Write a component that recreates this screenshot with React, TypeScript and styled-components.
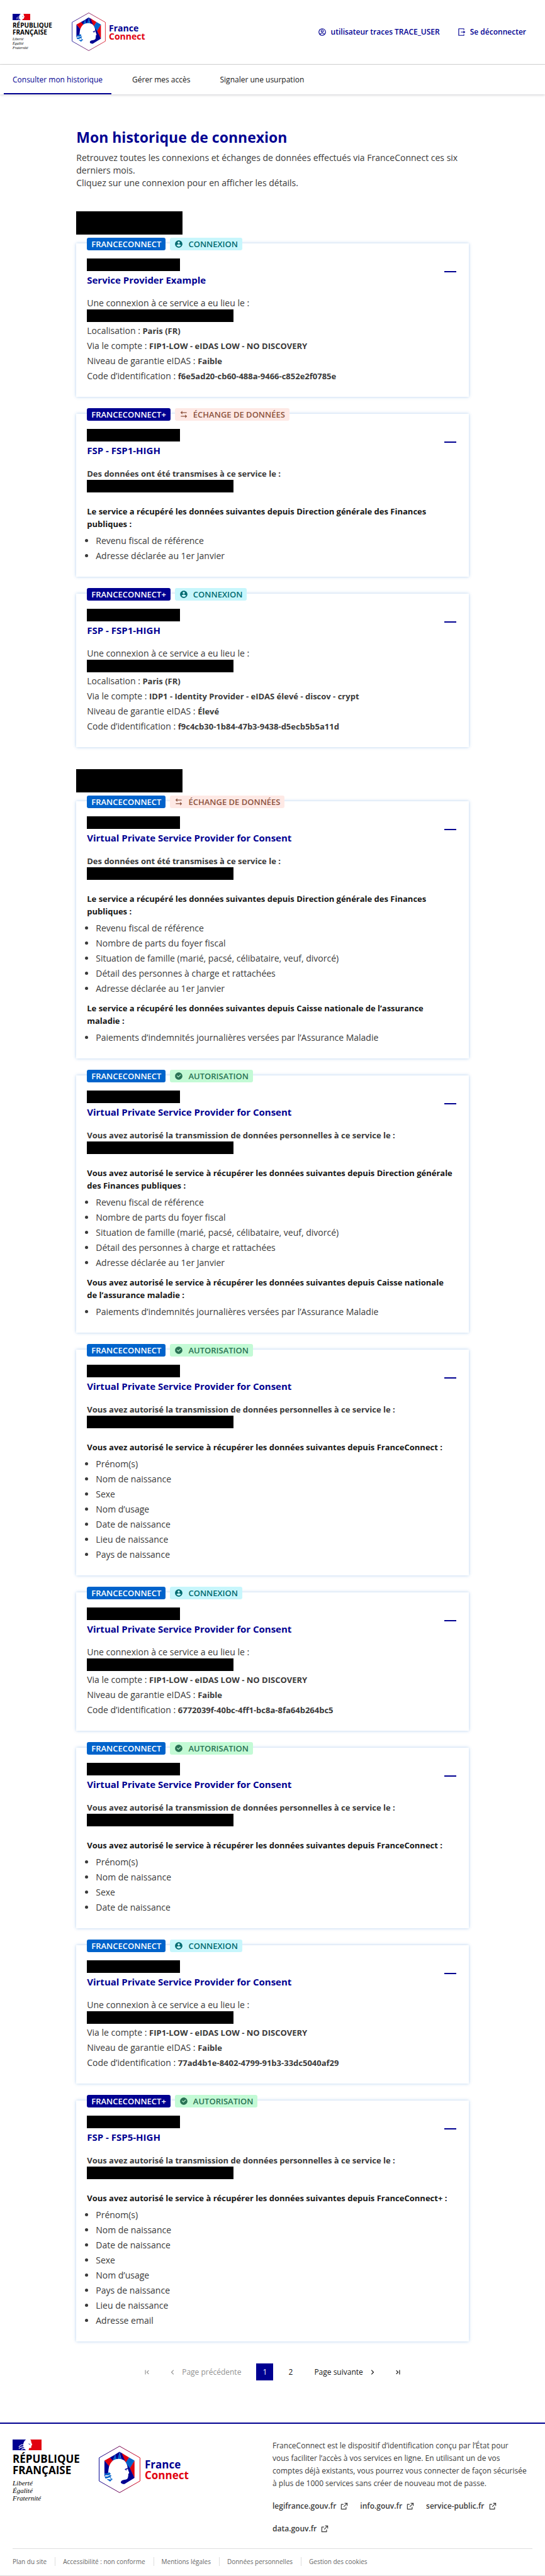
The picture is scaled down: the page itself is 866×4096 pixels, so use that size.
import React, { useState } from "react";
import styled, { createGlobalStyle } from "styled-components";
import {
  RiAccountCircleFill,
  RiAccountCircleLine,
  RiArrowLeftSLine,
  RiArrowRightSLine,
  RiCheckboxCircleFill,
  RiExternalLinkLine,
  RiLogoutBoxRLine,
} from "react-icons/ri";

const blue = "#000091";
const red = "#e1000f";
const lightBlue = "#0063cb";

const GlobalStyle = createGlobalStyle`
  *, *::before, *::after { box-sizing: border-box; }
  body {
    margin: 0;
    background: #fff;
    color: #3a3a3a;
    font-family: "Open Sans", "Noto Sans", sans-serif;
    font-size: 14px;
    line-height: 20px;
  }
  h1, h2, h3, h4, p, ul { margin: 0; padding: 0; }
  ul { list-style: none; }
  a { color: inherit; text-decoration: none; }
  button { font: inherit; color: inherit; background: none; border: 0; padding: 0; cursor: pointer; }
  svg { display: block; flex: none; }
`;

/* Header */

const HeaderBar = styled.header`
  display: flex;
  align-items: flex-start;
  justify-content: space-between;
  height: 103px;
  padding: 20px;
  border-bottom: 1px solid #ddd;
`;

const LogoGroup = styled.div<{ $large?: boolean }>`
  display: flex;
  align-items: flex-start;
  gap: ${(p) => (p.$large ? 28 : 29)}px;
`;

const StateLogo = styled.div<{ $large?: boolean }>`
  width: ${(p) => (p.$large ? 109 : 65)}px;
  padding-top: ${(p) => (p.$large ? 0 : 2)}px;
  color: #000;
`;

const StateName = styled.div<{ $large?: boolean }>`
  margin-top: ${(p) => (p.$large ? 5 : 3)}px;
  font-weight: 700;
  white-space: nowrap;
  font-size: ${(p) => (p.$large ? 17 : 10)}px;
  line-height: ${(p) => (p.$large ? 18 : 11)}px;
`;

const StateMotto = styled.div<{ $large?: boolean }>`
  margin-top: ${(p) => (p.$large ? 5 : 2)}px;
  font-family: "Liberation Serif", serif;
  font-style: italic;
  font-size: ${(p) => (p.$large ? 11 : 6)}px;
  line-height: ${(p) => (p.$large ? 12 : 7)}px;
`;

const BrandLogo = styled.div<{ $large?: boolean }>`
  display: flex;
  align-items: center;
  gap: ${(p) => (p.$large ? 7 : 5)}px;
  padding-top: ${(p) => (p.$large ? 10 : 0)}px;
  font-weight: 700;
  font-size: ${(p) => (p.$large ? 17 : 14)}px;
  line-height: ${(p) => (p.$large ? 17 : 13)}px;
`;

const BrandWord = styled.div<{ $red?: boolean }>`
  color: ${(p) => (p.$red ? red : blue)};
`;

const Tools = styled.div`
  display: flex;
  gap: 27px;
  padding: 21px 10px 0 0;
  color: ${blue};
  font-size: 12px;
  font-weight: 600;
`;

const ToolLink = styled.a`
  display: flex;
  align-items: center;
  gap: 7px;
`;

const Nav = styled.nav`
  display: flex;
  height: 47px;
  padding: 0 6px;
  box-shadow: 0 1px 4px rgba(0, 0, 18, 0.2);
`;

const NavLink = styled.a<{ $active?: boolean }>`
  display: flex;
  align-items: center;
  padding: 2px 14px 0;
  margin-right: 19px;
  font-size: 12px;
  color: ${(p) => (p.$active ? blue : "#161616")};
  border-bottom: 2px solid ${(p) => (p.$active ? blue : "transparent")};
`;

/* History */

const Main = styled.main`
  width: 72%;
  margin: 0 auto;
  padding: 52px 0 67px;
`;

const PageTitle = styled.h1`
  color: ${blue};
  font-size: 23px;
  line-height: 32px;
  font-weight: 700;
`;

const Intro = styled.p`
  margin-top: 7px;
`;

const DayGroup = styled.section`
  margin-top: 35px;
`;

const Redacted = styled.div<{ $kind: "day" | "date" | "moment" }>`
  background: #000;
  height: ${(p) => (p.$kind === "day" ? 37 : 20)}px;
  width: ${(p) => ({ day: 169, date: 148, moment: 233 })[p.$kind]}px;
`;

const CardList = styled.div`
  display: flex;
  flex-direction: column;
  gap: 27px;
  margin-top: 14px;
`;

const Card = styled.article`
  padding: 0 17px 19px;
  background: #fff;
  box-shadow: 0 0 5px rgba(0, 99, 203, 0.3);
`;

const Badges = styled.div`
  display: flex;
  gap: 7px;
  margin-top: -9px;
`;

const tones = {
  standard: { bg: lightBlue, fg: "#fff" },
  plus: { bg: blue, fg: "#fff" },
  connexion: { bg: "#c7f6fc", fg: "#006a6f" },
  exchange: { bg: "#fee9e5", fg: "#8d533e" },
  consent: { bg: "#c3fad5", fg: "#297254" },
};

const Badge = styled.span<{ $tone: keyof typeof tones }>`
  display: flex;
  align-items: center;
  gap: 8px;
  height: 20px;
  padding: 0 7px;
  border-radius: 3px;
  font-size: 13px;
  font-weight: 600;
  text-transform: uppercase;
  background: ${(p) => tones[p.$tone].bg};
  color: ${(p) => tones[p.$tone].fg};
`;

const CardHead = styled.div`
  display: flex;
  justify-content: space-between;
  align-items: flex-start;
  margin-top: 13px;
`;

const CardTitle = styled.h3`
  margin-top: 4px;
  color: ${blue};
  font-size: 15px;
  line-height: 20px;
  font-weight: 700;
`;

const ToggleButton = styled.button`
  display: flex;
  align-items: center;
  height: 41px;
  padding: 0 3px;
`;

const Details = styled.div`
  margin-top: 17px;
`;

const Strong = styled.strong`
  font-size: 13px;
  font-weight: 700;
`;

const Fact = styled.p`
  padding-top: 4px;
`;

const FactList = styled.div`
  padding-bottom: 4px;
`;

const Source = styled.div`
  margin-top: 20px;

  & + & {
    margin-top: 7px;
  }
`;

const SourceTitle = styled.h4`
  color: #161616;
  font-size: 13px;
  line-height: 20px;
  font-weight: 700;
`;

const Claims = styled.ul`
  margin-top: 7px;
  padding-left: 14px;
  list-style: disc;

  li {
    padding-bottom: 4px;
  }
`;

/* Pagination */

const Pagination = styled.nav`
  display: flex;
  justify-content: center;
  gap: 14px;
  margin-top: 35px;
  font-size: 12px;
  color: #161616;
`;

const PageButton = styled.button<{ $current?: boolean }>`
  display: flex;
  align-items: center;
  justify-content: center;
  width: 27px;
  height: 27px;
  background: ${(p) => (p.$current ? blue : "transparent")};
  color: ${(p) => (p.$current ? "#f5f5fe" : "inherit")};

  &:disabled {
    color: #929292;
    cursor: default;
  }
`;

const StepButton = styled(PageButton)<{ $next?: boolean }>`
  width: auto;
  gap: 8px;
  padding: ${(p) => (p.$next ? "0 6px 0 10px" : "0 10px 0 6px")};
`;

/* Footer */

const FooterBar = styled.footer`
  padding: 25px 20px 15px;
  border-top: 2px solid ${blue};
  border-bottom: 1px solid #ddd;
`;

const FooterTop = styled.div`
  display: grid;
  grid-template-columns: 1fr 1fr;
  padding-bottom: 21px;
  border-bottom: 1px solid #ddd;
`;

const FooterText = styled.div`
  font-size: 12px;
`;

const SiteLinks = styled.div`
  display: flex;
  flex-wrap: wrap;
  gap: 16px 18px;
  margin-top: 16px;
  font-weight: 600;
`;

const SiteLink = styled.a`
  display: flex;
  align-items: center;
  gap: 6px;
`;

const LegalLinks = styled.div`
  display: flex;
  padding-top: 13px;
  font-size: 10px;
  line-height: 14px;
  color: #666;

  a + a {
    margin-left: 13px;
    padding-left: 12px;
    border-left: 1px solid #ddd;
  }
`;

function Flag({ width, height }: { width: number; height: number }) {
  return (
    <svg width={width} height={height} viewBox="0 0 56 20" preserveAspectRatio="none" aria-hidden="true">
      <path d="M0 0H26C23 2 22 4 21 7C20 10 22 12 20 13C23 14 22 18 26 20H0Z" fill={blue} />
      <path d="M56 0H34C37 2 35 4 37 7L38 10L36 12C37 15 36 16 32 16L31 20H56Z" fill={red} />
      <path d="M12 14C15 10 18 9 21 10M12 17C15 14 18 13 22 14M17 19C19 16 21 17 24 17" stroke="#fff" strokeWidth="1.3" fill="none" />
      <path d="M31 8L34 9" stroke={blue} strokeWidth="1" />
    </svg>
  );
}

function Marianne({ width, height, id }: { width: number; height: number; id: string }) {
  return (
    <svg width={width} height={height} viewBox="0 0 236 268" aria-hidden="true">
      <defs>
        <linearGradient id={id} x1="0" x2="1" y1="0" y2="0">
          <stop offset="0" stopColor={blue} />
          <stop offset="1" stopColor={red} />
        </linearGradient>
      </defs>
      <path d="M118 2L234 68V200L118 266L2 200V68Z" fill="#fff" stroke={`url(#${id})`} strokeWidth="3.5" />
      <path d="M32 84L64 66L84 80L59 118Z" fill={red} />
      <path d="M32 84L60 117L56 150L32 172Z" fill={blue} />
      <path d="M64 66L94 49L80 84Z" fill={blue} />
      <path d="M94 49L118 34L100 82L78 84Z" fill={lightBlue} />
      <path d="M118 34L94 49L102 80H118Z" fill={blue} />
      <path d="M118 36L104 82H128Z" fill={lightBlue} />
      <path d="M118 34L140 47L156 96L130 86Z" fill={blue} />
      <path d="M130 41L172 66L154 98Z" fill={red} />
      <path d="M172 66L203 84L177 130L153 96Z" fill={lightBlue} />
      <path d="M203 84V182L176 129Z" fill={red} />
      <path d="M154 96L177 128L203 182L146 217C128 218 120 208 128 200C138 190 168 196 164 178Z" fill={blue} />
      <path
        d="M54 168C52 110 70 76 112 74C142 74 152 88 158 104C164 114 161 120 167 138L173 155L167 160C169 168 166 172 166 180C160 190 142 184 134 190C126 198 122 208 128 216H88C96 190 70 190 60 174Z"
        fill="#fff"
      />
      <path d="M146 133L164 125L163 133L156 134L158 142L152 137Z" fill={blue} />
      <path d="M32 158C40 154 48 162 58 150L68 158C60 170 44 170 32 164Z" fill={lightBlue} />
      <path d="M32 172C48 178 52 172 66 166L72 170C66 180 50 184 38 186Z" fill={lightBlue} />
      <path d="M46 190C58 188 62 196 80 186L64 204C58 196 52 196 46 190Z" fill={lightBlue} />
      <path d="M64 178L76 194" stroke={lightBlue} strokeWidth="4" />
    </svg>
  );
}

function Logos({ large }: { large?: boolean }) {
  return (
    <LogoGroup $large={large}>
      <StateLogo $large={large}>
        <Flag width={large ? 46 : 28} height={large ? 17 : 10} />
        <StateName $large={large}>
          RÉPUBLIQUE
          <br />
          FRANÇAISE
        </StateName>
        <StateMotto $large={large}>
          Liberté
          <br />
          Égalité
          <br />
          Fraternité
        </StateMotto>
      </StateLogo>
      <BrandLogo $large={large}>
        <Marianne width={large ? 66 : 54} height={large ? 75 : 61} id={large ? "ring-footer" : "ring-header"} />
        <div>
          <BrandWord>France</BrandWord>
          <BrandWord $red>Connect</BrandWord>
        </div>
      </BrandLogo>
    </LogoGroup>
  );
}

function ExchangeIcon() {
  return (
    <svg width="14" height="14" viewBox="0 0 24 24" fill="currentColor" aria-hidden="true">
      <path d="M16 16v-4l5 5-5 5v-4H4v-2h12zM8 2v4h12v2H8v4L3 7l5-5z" />
    </svg>
  );
}

function EndIcon({ last }: { last?: boolean }) {
  return (
    <svg width="14" height="14" viewBox="0 0 24 24" fill="none" stroke="currentColor" strokeWidth="2" aria-hidden="true">
      <path d={last ? "M8 7l5 5-5 5M17 6v12" : "M16 7l-5 5 5 5M7 6v12"} />
    </svg>
  );
}

type Entry = {
  plus?: boolean;
  kind: "connexion" | "exchange" | "consent";
  service: string;
  facts?: [string, string][];
  sources?: { name: string; claims: string[] }[];
};

const kinds = {
  connexion: { label: "Connexion", icon: <RiAccountCircleFill size={14} />, lead: "Une connexion à ce service a eu lieu le :", source: "" },
  exchange: {
    label: "Échange de données",
    icon: <ExchangeIcon />,
    lead: "Des données ont été transmises à ce service le :",
    source: "Le service a récupéré les données suivantes depuis",
  },
  consent: {
    label: "Autorisation",
    icon: <RiCheckboxCircleFill size={14} />,
    lead: "Vous avez autorisé la transmission de données personnelles à ce service le :",
    source: "Vous avez autorisé le service à récupérer les données suivantes depuis",
  },
};

const PRIVATE = "Virtual Private Service Provider for Consent";
const LOW = "FIP1-LOW - eIDAS LOW - NO DISCOVERY";
const taxAndHealth = [
  {
    name: "Direction générale des Finances publiques",
    claims: [
      "Revenu fiscal de référence",
      "Nombre de parts du foyer fiscal",
      "Situation de famille (marié, pacsé, célibataire, veuf, divorcé)",
      "Détail des personnes à charge et rattachées",
      "Adresse déclarée au 1er Janvier",
    ],
  },
  {
    name: "Caisse nationale de\u00a0l’assurance maladie",
    claims: ["Paiements d’indemnités journalières versées par l’Assurance Maladie"],
  },
];

const days: Entry[][] = [
  [
    {
      kind: "connexion",
      service: "Service Provider Example",
      facts: [
        ["Localisation", "Paris (FR)"],
        ["Via le compte", LOW],
        ["Niveau de garantie eIDAS", "Faible"],
        ["Code d’identification", "f6e5ad20-cb60-488a-9466-c852e2f0785e"],
      ],
    },
    {
      plus: true,
      kind: "exchange",
      service: "FSP - FSP1-HIGH",
      sources: [
        {
          name: "Direction générale des Finances publiques",
          claims: ["Revenu fiscal de référence", "Adresse déclarée au 1er Janvier"],
        },
      ],
    },
    {
      plus: true,
      kind: "connexion",
      service: "FSP - FSP1-HIGH",
      facts: [
        ["Localisation", "Paris (FR)"],
        ["Via le compte", "IDP1 - Identity Provider - eIDAS élevé - discov - crypt"],
        ["Niveau de garantie eIDAS", "Élevé"],
        ["Code d’identification", "f9c4cb30-1b84-47b3-9438-d5ecb5b5a11d"],
      ],
    },
  ],
  [
    { kind: "exchange", service: PRIVATE, sources: taxAndHealth },
    { kind: "consent", service: PRIVATE, sources: taxAndHealth },
    {
      kind: "consent",
      service: PRIVATE,
      sources: [
        {
          name: "FranceConnect",
          claims: ["Prénom(s)", "Nom de naissance", "Sexe", "Nom d’usage", "Date de naissance", "Lieu de naissance", "Pays de naissance"],
        },
      ],
    },
    {
      kind: "connexion",
      service: PRIVATE,
      facts: [
        ["Via le compte", LOW],
        ["Niveau de garantie eIDAS", "Faible"],
        ["Code d’identification", "6772039f-40bc-4ff1-bc8a-8fa64b264bc5"],
      ],
    },
    {
      kind: "consent",
      service: PRIVATE,
      sources: [{ name: "FranceConnect", claims: ["Prénom(s)", "Nom de naissance", "Sexe", "Date de naissance"] }],
    },
    {
      kind: "connexion",
      service: PRIVATE,
      facts: [
        ["Via le compte", LOW],
        ["Niveau de garantie eIDAS", "Faible"],
        ["Code d’identification", "77ad4b1e-8402-4799-91b3-33dc5040af29"],
      ],
    },
    {
      plus: true,
      kind: "consent",
      service: "FSP - FSP5-HIGH",
      sources: [
        {
          name: "FranceConnect+",
          claims: [
            "Prénom(s)",
            "Nom de naissance",
            "Date de naissance",
            "Sexe",
            "Nom d’usage",
            "Pays de naissance",
            "Lieu de naissance",
            "Adresse email",
          ],
        },
      ],
    },
  ],
];

function EntryCard({ entry }: { entry: Entry }) {
  const [open, setOpen] = useState(true);
  const kind = kinds[entry.kind];
  return (
    <Card>
      <Badges>
        <Badge $tone={entry.plus ? "plus" : "standard"}>{entry.plus ? "FranceConnect+" : "FranceConnect"}</Badge>
        <Badge $tone={entry.kind}>
          {kind.icon}
          {kind.label}
        </Badge>
      </Badges>
      <CardHead>
        <div>
          <Redacted $kind="date" />
          <CardTitle>{entry.service}</CardTitle>
        </div>
        <ToggleButton type="button" aria-expanded={open} aria-label={entry.service} onClick={() => setOpen(!open)}>
          <svg width="19" height="20" viewBox="0 0 19 20" stroke={blue} strokeWidth="2">
            <path d={open ? "M0 10H19" : "M0 10H19M9 1V19"} />
          </svg>
        </ToggleButton>
      </CardHead>
      {open && (
        <Details>
          <p>{entry.facts ? kind.lead : <Strong>{kind.lead}</Strong>}</p>
          <Redacted $kind="moment" />
          {entry.facts && (
            <FactList>
              {entry.facts.map(([label, value]) => (
                <Fact key={label}>
                  {`${label} : `}
                  <Strong>{value}</Strong>
                </Fact>
              ))}
            </FactList>
          )}
          {entry.sources?.map((source) => (
            <Source key={source.name}>
              <SourceTitle>{`${kind.source} ${source.name} :`}</SourceTitle>
              <Claims>
                {source.claims.map((claim) => (
                  <li key={claim}>{claim}</li>
                ))}
              </Claims>
            </Source>
          ))}
        </Details>
      )}
    </Card>
  );
}

export default function App() {
  return (
    <>
      <GlobalStyle />
      <HeaderBar>
        <Logos />
        <Tools>
          <ToolLink href="#compte">
            <RiAccountCircleLine size={14} />
            utilisateur traces TRACE_USER
          </ToolLink>
          <ToolLink href="#deconnexion">
            <RiLogoutBoxRLine size={14} />
            Se déconnecter
          </ToolLink>
        </Tools>
      </HeaderBar>
      <Nav>
        <NavLink href="#historique" $active aria-current="page">
          Consulter mon historique
        </NavLink>
        <NavLink href="#acces">Gérer mes accès</NavLink>
        <NavLink href="#usurpation">Signaler une usurpation</NavLink>
      </Nav>
      <Main>
        <PageTitle>Mon historique de connexion</PageTitle>
        <Intro>
          Retrouvez toutes les connexions et échanges de données effectués via FranceConnect ces six derniers mois.
          <br />
          Cliquez sur une connexion pour en afficher les détails.
        </Intro>
        {days.map((entries, day) => (
          <DayGroup key={day}>
            <Redacted $kind="day" />
            <CardList>
              {entries.map((entry, index) => (
                <EntryCard key={index} entry={entry} />
              ))}
            </CardList>
          </DayGroup>
        ))}
        <Pagination aria-label="Pagination">
          <PageButton type="button" disabled aria-label="Première page">
            <EndIcon />
          </PageButton>
          <StepButton type="button" disabled>
            <RiArrowLeftSLine size={14} />
            Page précédente
          </StepButton>
          <PageButton type="button" $current aria-current="page">
            1
          </PageButton>
          <PageButton type="button">2</PageButton>
          <StepButton type="button" $next>
            Page suivante
            <RiArrowRightSLine size={14} />
          </StepButton>
          <PageButton type="button" aria-label="Dernière page">
            <EndIcon last />
          </PageButton>
        </Pagination>
      </Main>
      <FooterBar>
        <FooterTop>
          <Logos large />
          <FooterText>
            <p>
              FranceConnect est le dispositif d’identification conçu par l’État pour vous&nbsp;faciliter l’accès à vos
              services en ligne. En utilisant un de vos comptes&nbsp;déjà existants, vous pourrez vous connecter de
              façon sécurisée à&nbsp;plus de 1000 services sans créer de nouveau mot de passe.
            </p>
            <SiteLinks>
              {["legifrance.gouv.fr", "info.gouv.fr", "service-public.fr", "data.gouv.fr"].map((site) => (
                <SiteLink key={site} href={`#${site}`}>
                  {site}
                  <RiExternalLinkLine size={14} />
                </SiteLink>
              ))}
            </SiteLinks>
          </FooterText>
        </FooterTop>
        <LegalLinks>
          <a href="#plan">Plan du site</a>
          <a href="#accessibilite">Accessibilité : non conforme</a>
          <a href="#mentions">Mentions légales</a>
          <a href="#donnees">Données personnelles</a>
          <a href="#cookies">Gestion des cookies</a>
        </LegalLinks>
      </FooterBar>
    </>
  );
}
